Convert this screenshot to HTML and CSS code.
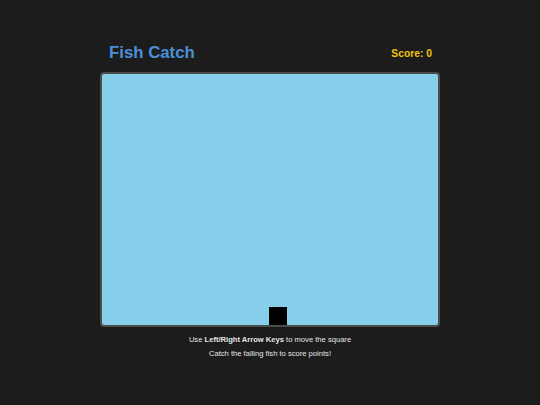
FILE: index.html
```html
<!DOCTYPE html>
<html>
<head>
<meta charset="utf-8">
<link rel="stylesheet" href="styles.css">
</head>
<body>
<div class="wrap">
  <div class="header">
    <h1 class="title">Fish Catch</h1>
    <div class="score">Score: 0</div>
  </div>
  <div class="game">
    <div class="player"></div>
  </div>
  <div class="help">
    <p>Use <b>Left/Right Arrow Keys</b> to move the square</p>
    <p>Catch the falling fish to score points!</p>
  </div>
</div>
</body>
</html>
```
FILE: styles.css
```css
html, body {
  margin: 0;
  padding: 0;
  background: #1c1c1c;
  font-family: "Liberation Sans", Arial, sans-serif;
}
.wrap {
  width: 340px;
  margin: 0 auto;
  padding-top: 42px;
}
.header {
  display: flex;
  justify-content: space-between;
  align-items: center;
  padding: 0 8px 0 9px;
  height: 22px;
  margin-bottom: 8px;
}
.title {
  margin: 0;
  font-size: 16.8px;
  font-weight: bold;
  color: #4a90d9;
}
.score {
  font-size: 10.3px;
  font-weight: bold;
  color: #f1c40f;
}
.game {
  position: relative;
  height: 251px;
  background: #87ceeb;
  border: 2px solid #4d4d4d;
  border-radius: 4px;
}
.player {
  position: absolute;
  left: 167px;
  bottom: 0;
  width: 18px;
  height: 18px;
  background: #000;
}
.help {
  margin-top: 8px;
  text-align: center;
  color: #e6e6e6;
  font-size: 7.6px;
}
.help p {
  margin: 0 0 5.4px;
}
```
